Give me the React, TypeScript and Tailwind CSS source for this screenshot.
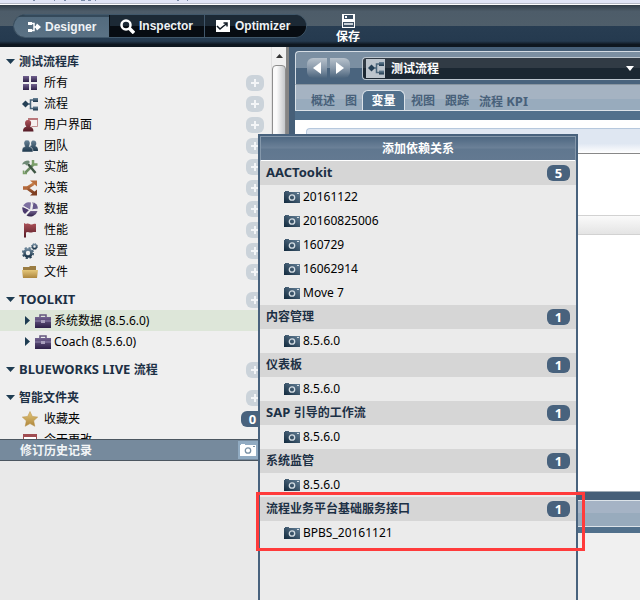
import React from "react";

type IconName =
  | "all" | "flow" | "ui" | "team" | "tools" | "decide" | "data" | "flag" | "gear" | "folder" | "star" | "calendar" | "case";

const iconArt: Record<IconName, React.ReactNode> = {
  all: (
    <g fill="url(#purple)">
      <rect x="1" y="1" width="6" height="6" /><rect x="9" y="1" width="6" height="6" />
      <rect x="1" y="9" width="6" height="6" /><rect x="9" y="9" width="6" height="6" />
    </g>
  ),
  flow: (
    <g>
      <path d="M0 8l3.500-3.500L7 8l-3.500 3.500z" fill="#243f55" />
      <path d="M6 8h3M12 4H8.500v8.500H12" fill="none" stroke="#4b667b" strokeWidth="1.500" />
      <rect x="11" y="2" width="5" height="4" fill="url(#slate)" /><rect x="11" y="10.500" width="5" height="4" fill="url(#slate)" />
    </g>
  ),
  ui: (
    <g>
      <path d="M6.500 1.500h9v8h-6" fill="#f6f0f0" stroke="#c49092" />
      <path d="M6 1h10v2H6z" fill="#b9777a" />
      <path d="M6 3c2.800 0 3.500 2 3 4.200-.2 1.300-.8 1.800-.8 2.600 2 .6 3.300 1.700 3.300 4.700H1c0-3 1-4.100 3.300-4.700 0-.8-1-1.300-1.200-2.600C2.800 5 3.500 3 6 3z" fill="url(#red)" />
    </g>
  ),
  team: (
    <g fill="url(#slate)">
      <path d="M11.500 2.500c2.300 0 3 1.700 2.800 3.500-.2 1.200-.8 1.700-.8 2.300 2 .5 2.500 1.800 2.500 4.700H9L8 8l1.500-.8C8.500 4.500 9.500 2.500 11.500 2.500z" />
      <path d="M5 2c2.500 0 3.200 1.900 3 3.900-.2 1.300-.8 1.900-.8 2.600 2.500.7 3.800 1.700 3.800 5.500H0c0-3.800.7-4.800 3-5.500 0-.7-.8-1.300-1-2.600C1.700 3.900 2.500 2 5 2z" stroke="#efefef" strokeWidth=".5" />
    </g>
  ),
  tools: (
    <g fill="none">
      <path d="M3 14l8.500-8.500" stroke="#6d8d63" strokeWidth="2.500" />
      <path d="M6 5l7.500 9" stroke="#3e5643" strokeWidth="2.500" />
      <path d="M0 5.500C1 3 3 1.500 6.500 1.500L8 3 4.500 6.500 3 5z" fill="#6f8a76" />
      <path d="M11 1v4.500h4.500" stroke="#7b9f69" strokeWidth="2.500" />
      <path d="M1.500 11.500v3H5" stroke="#7b9f69" strokeWidth="1.500" />
    </g>
  ),
  decide: (
    <g>
      <path d="M1 8h4l7-4.500M5 8l7 5" fill="none" stroke="url(#orange)" strokeWidth="2.800" />
      <path d="M8 .5h7v6z" fill="#b96f3d" /><path d="M15 9.500v6H8z" fill="#7e3e21" />
      <path d="M1 6.500h5v3H1z" fill="#b4683a" />
    </g>
  ),
  data: (
    <g>
      <path d="M10 1a7 7 0 0 1 6 7l-6 1z" fill="#66588a" />
      <path d="M9 1.500A7 7 0 0 0 1 5l7 4z" fill="#7d70a0" />
      <path d="M.5 6A7 7 0 0 0 3 13l4-4z" fill="#4b3a6e" />
      <path d="M4.500 14.500A7.500 7.500 0 0 0 15.500 10L8.500 10z" fill="url(#purple)" />
      <path d="M10 8l1-7M9 9l7-1M8 9L1 5M8 9l-4 5" stroke="#efefef" strokeWidth="1" />
    </g>
  ),
  flag: <path d="M2 1l2 1c3-1.500 4 1 6 .5 1.500-.3 2-1 4-.5v8c-3-.5-4 .9-6 .5-1.500-.5-2.500-1-4 0v5H2z" fill="url(#red)" />,
  gear: (
    <g fill="none" stroke="url(#slate)">
      <circle cx="6" cy="10" r="3.500" strokeWidth="2.600" />
      <circle cx="6" cy="10" r="5.200" strokeWidth="1.700" strokeDasharray="2.200 1.880" />
      <circle cx="12.500" cy="3.500" r="2" strokeWidth="1.500" />
      <circle cx="12.500" cy="3.500" r="3" strokeWidth="1" strokeDasharray="1.300 1.050" />
    </g>
  ),
  folder: (
    <g>
      <path d="M1 3h6l1-1h6v4H1z" fill="#9a7c42" />
      <path d="M0 6h16l-1 8H1z" fill="url(#gold)" />
    </g>
  ),
  star: <path d="M8 .5l2.300 4.900 5.400.7-4 3.700 1.100 5.500L8 12.600l-4.800 2.700 1.100-5.500-4-3.700 5.400-.7z" fill="url(#gold)" stroke="#b68f43" strokeWidth=".5" />,
  calendar: (
    <g>
      <rect x="1.500" y="2.500" width="13" height="13" fill="#fff" stroke="#9b4b50" />
      <path d="M1 2h14v3H1z" fill="#a14d52" /><path d="M4 7h8v1H4z" fill="#9b4b50" />
    </g>
  ),
  case: (
    <g>
      <path d="M5 4V2h6v2" fill="none" stroke="#65577f" strokeWidth="1.500" />
      <path d="M0 4h16v11H0z" fill="url(#purple)" />
      <path d="M0 8h16" stroke="#8e82aa" /><rect x="6" y="7" width="4" height="3" fill="#aaa0bd" />
    </g>
  ),
};

function Icon({ name }: { name: IconName }) {
  return <svg viewBox="0 0 16 16" className="size-4 shrink-0" aria-hidden="true">{iconArt[name]}</svg>;
}

function Gradients() {
  const stops: [string, string, string][] = [
    ["purple", "#72628f", "#2e2048"], ["slate", "#698397", "#1d374c"], ["red", "#ad5259", "#541a25"],
    ["orange", "#c9814b", "#7e3e21"], ["gold", "#e5c779", "#ad863d"],
  ];
  return (
    <svg className="absolute size-0" aria-hidden="true">
      <defs>
        {stops.map(([id, a, b]) => (
          <linearGradient key={id} id={id} x1="0" y1="0" x2="0" y2="1"><stop stopColor={a} /><stop offset="1" stopColor={b} /></linearGradient>
        ))}
        <linearGradient id="camera" x1="1" y1="0" x2="0" y2="1"><stop stopColor="#68839a" /><stop offset="1" stopColor="#10283c" /></linearGradient>
      </defs>
    </svg>
  );
}

function Camera({ white = false }: { white?: boolean }) {
  const detail = white ? "#7890a5" : "#d5dde3";
  return (
    <svg viewBox="0 0 16 12" className="h-3 w-4 shrink-0" aria-hidden="true">
      <path d="M0 1h1V0h4v1h11v11H0z" fill={white ? "#fff" : "url(#camera)"} />
      <circle cx="8" cy="6.500" r="2.700" fill="none" stroke={detail} strokeWidth="1.300" />
      <path d="M13 2.500h2" stroke={detail} />
    </svg>
  );
}

/* Latin words in bold headings are set one step larger than the Chinese text. */
function Heading({ text }: { text: string }) {
  return <>{text.split(/([A-Z][A-Za-z ]+)/).map((part, i) => (i % 2 ? <span key={i} className="text-[13px] whitespace-pre">{part}</span> : part))}</>;
}

function Count({ value }: { value: number }) {
  return <span className="ml-auto h-4 w-[23px] shrink-0 rounded-md bg-[#48627d] text-center text-[13px] font-bold leading-4 text-white">{value}</span>;
}

function AddButton({ label }: { label: string }) {
  return (
    <button aria-label={`新建 ${label}`} className="ml-auto flex h-4 w-[18px] shrink-0 items-center justify-center rounded-md bg-[#cbd3da]">
      <svg viewBox="0 0 8 8" className="size-2"><path d="M4 0v8M0 4h8" stroke="#f3f5f7" strokeWidth="2" /></svg>
    </button>
  );
}

function Section({ title, add = true, children }: { title: string; add?: boolean; children?: React.ReactNode }) {
  return (
    <section className="mb-[7px]">
      <div className="flex h-[21px] items-center pr-[7px] pl-[6px]">
        <svg viewBox="0 0 9 5" className="mr-1 h-[5px] w-[9px]" aria-hidden="true"><path d="M0 0h9L4.500 5z" fill="#1e3c52" /></svg>
        <h2 className="font-bold whitespace-nowrap text-[#1c3045]"><Heading text={title} /></h2>
        {add && <AddButton label={title} />}
      </div>
      <ul>{children}</ul>
    </section>
  );
}

function Item({ icon, label, children }: { icon: IconName; label: string; children?: React.ReactNode }) {
  return (
    <li className="flex h-[21px] items-center pr-[7px] pl-[22px] text-black">
      <Icon name={icon} /><span className="ml-[6px]">{label}</span>{children}
    </li>
  );
}

function ToolkitItem({ label, active = false }: { label: string; active?: boolean }) {
  return (
    <li className={`flex h-[21px] items-center pl-[25px] text-black ${active ? "bg-[#dde6d9]" : ""}`}>
      <svg viewBox="0 0 5 9" className="mr-[5px] h-[9px] w-[5px]" aria-hidden="true"><path d="M0 0v9l5-4.500z" fill="#1e3c52" /></svg>
      <Icon name="case" /><span className="ml-[3px]">{label}</span>
    </li>
  );
}

const library: [IconName, string][] = [
  ["all", "所有"], ["flow", "流程"], ["ui", "用户界面"], ["team", "团队"], ["tools", "实施"],
  ["decide", "决策"], ["data", "数据"], ["flag", "性能"], ["gear", "设置"], ["folder", "文件"],
];

const dependencies = [
  { name: "AACTookit", versions: ["20161122", "20160825006", "160729", "16062914", "Move 7"] },
  { name: "内容管理", versions: ["8.5.6.0"] },
  { name: "仪表板", versions: ["8.5.6.0"] },
  { name: "SAP 引导的工作流", versions: ["8.5.6.0"] },
  { name: "系统监管", versions: ["8.5.6.0"] },
  { name: "流程业务平台基础服务接口", versions: ["BPBS_20161121"] },
];

function Header() {
  const tab = "flex h-full items-center text-xs font-bold text-[#eef2f5] font-['Liberation_Sans',sans-serif]";
  const dark = "bg-[linear-gradient(#1c2935_50%,#070c12_50%)]";
  return (
    <header>
      <div className="h-[5px] border-b border-white bg-[#e0e4f6]">
        <div className="h-1 border-b border-[#b5b9c6]">
          <svg viewBox="0 0 200 1" className="h-px w-[200px]" aria-hidden="true">
            <path d="M33 .5h2M54 .5h1M64 .5h2M81 .5h4M88 .5h3M95 .5h1M177 .5h2M187 .5h1" stroke="#7a8ba8" />
          </svg>
        </div>
      </div>
      <div className="flex h-[42px] items-center bg-[linear-gradient(#313d48,#4d5c69_15%,#4f5e6a_50%,#283d52_50%,#253a4f_86%,#0e1720_94%)] pl-[13px]">
        <nav className="flex h-6 overflow-hidden rounded-full border border-[#41586b] bg-[#0f1922]">
          <button className={`${tab} w-[95px] gap-1 border-t-2 border-[#34495a] bg-[linear-gradient(#536b7e,#5b7285)] pl-[13px]`}>
            <svg viewBox="0 0 14 12" className="h-3 w-[14px]" aria-hidden="true">
              <path d="M1 1h4v3H1zM1 8h4v3H1zM10 2.500l4 3.500-4 3.500L8 6z" fill="#fff" />
              <path d="M4 2.500h3v7H4M7 6h3" fill="none" stroke="#fff" strokeWidth="1.500" />
            </svg>
            Designer
          </button>
          <button className={`${tab} ${dark} w-[95px] gap-1 border-l border-[#0b1219] pl-[10px]`}>
            <svg viewBox="0 0 15 15" className="size-[15px]" aria-hidden="true">
              <circle cx="6" cy="6" r="4.500" fill="none" stroke="#fff" strokeWidth="2.500" /><path d="M9 9l5 5" stroke="#fff" strokeWidth="3.500" />
            </svg>
            Inspector
          </button>
          <button className={`${tab} ${dark} w-[102px] gap-[5px] border-l border-[#40566a] pl-[11px]`}>
            <svg viewBox="0 0 14 12" className="h-3 w-[14px]" aria-hidden="true">
              <path d="M0 0h14v12H0z" fill="#fff" /><path d="M1 6l3 3 3-2.500 4-3M7.500 3H11v3.500" fill="none" stroke="#101a24" strokeWidth="1.500" />
            </svg>
            Optimizer
          </button>
        </nav>
        <button className="ml-[29px] flex flex-col items-center pt-[6px] font-bold text-white">
          <svg viewBox="0 0 13 14" className="h-[14px] w-[13px]" aria-hidden="true">
            <path d="M0 0h13v14H0z" fill="#fff" /><path d="M2 1h9v4H2zM1 8h11v5H1z" fill="#3d5063" />
            <path d="M3 2h2v2H3z" fill="#fff" /><path d="M2 9h9v2H2z" fill="#c9d0d7" />
          </svg>
          <span className="pt-px leading-4">保存</span>
        </button>
      </div>
    </header>
  );
}

function Sidebar() {
  return (
    <aside className="w-[289px] shrink-0">
      <div className="flex h-[392px]">
        <div className="w-[271px] overflow-hidden bg-[#efefef] pt-1">
          <Section title="测试流程库" add={false}>
            {library.map(([icon, label]) => <Item key={label} icon={icon} label={label}><AddButton label={label} /></Item>)}
          </Section>
          <Section title="TOOLKIT">
            <ToolkitItem label="系统数据 (8.5.6.0)" active />
            <ToolkitItem label="Coach (8.5.6.0)" />
          </Section>
          <Section title="BLUEWORKS LIVE 流程" />
          <Section title="智能文件夹">
            <Item icon="star" label="收藏夹"><Count value={0} /></Item>
            <Item icon="calendar" label="今天更改" />
          </Section>
        </div>
        <div className="w-[15px] border-l border-[#e0e0e0] bg-[#f0f0f0]">
          <div className="flex h-[18px] items-center justify-center">
            <svg viewBox="0 0 7 4" className="h-1 w-[7px]" aria-hidden="true"><path d="M0 4L3.500 0 7 4z" fill="#333" /></svg>
          </div>
          <div className="h-[374px] rounded-sm border border-[#8e8e8e] bg-[linear-gradient(90deg,#fafafa_30%,#c4c7ca)]" />
        </div>
        <div className="w-[3px] bg-[#858585]" />
      </div>
      <div className="flex h-[22px] items-center border-y border-[#4b5660] bg-[#768a9d] pl-5 font-bold text-[#f2f5f7]">
        <h2 className="pt-px">修订历史记录</h2>
        <button aria-label="快照" className="ml-auto mr-[31px] flex h-[18px] w-5 items-center justify-center bg-[#91abc2]"><Camera white /></button>
      </div>
    </aside>
  );
}

function Editor() {
  const tab = "h-[18px] leading-[18px]";
  const nav = "flex size-5 items-center justify-center bg-[linear-gradient(#b7c1cb,#8a9aab_50%,#4c657d)]";
  return (
    <main className="flex min-w-0 flex-1 flex-col bg-[#f0f0f0]">
      <div className="bg-[#465f78] pt-1 pl-[6px]">
        <div className="flex h-[33px] items-center rounded-tl border-t border-l border-[#d4dce4] bg-[linear-gradient(#7b8fa2_50%,#4a647e_50%)] pl-[11px]">
          <button aria-label="后退" className={`${nav} rounded-l-md`}>
            <svg viewBox="0 0 8 12" className="h-3 w-2"><path d="M8 0v12L0 6z" fill="#fff" /></svg>
          </button>
          <button aria-label="前进" className={`${nav} ml-[3px] rounded-r-md`}>
            <svg viewBox="0 0 8 12" className="h-3 w-2"><path d="M0 0v12l8-6z" fill="#fff" /></svg>
          </button>
          <div className="ml-3 flex h-[23px] flex-1 items-center rounded-l border border-r-0 border-[#bcc6cf] bg-[linear-gradient(#313b45_50%,#1b2732_50%)] pl-[3px]">
            <span className="flex size-[19px] items-center justify-center bg-[#bcc4cc]"><Icon name="flow" /></span>
            <select aria-label="当前流程" className="ml-[6px] min-w-0 flex-1 appearance-none pt-[2px] font-bold text-white"><option>测试流程</option></select>
            <svg viewBox="0 0 8 5" className="mr-[6px] h-[5px] w-2" aria-hidden="true"><path d="M0 0h8L4 5z" fill="#fff" /></svg>
          </div>
        </div>
      </div>
      <div className="bg-[#465f78] pl-[6px]">
        <div className="flex h-[27px] items-end border-t border-b border-l border-[#dce3e9] border-t-[#8996a2] bg-[linear-gradient(#a5b3c2_55%,#98abbd_55%)] pl-[15px] font-bold text-[#48617a]">
          <button className={tab}>概述</button>
          <button className={`${tab} ml-[10px]`}>图</button>
          <button className="ml-[5px] flex h-5 w-[43px] items-center justify-center rounded-t-md border border-b-0 border-[#dce3e9] bg-[#51708c] pt-px text-white">变量</button>
          <button className={`${tab} ml-[6px]`}>视图</button>
          <button className={`${tab} ml-[10px]`}>跟踪</button>
          <button className={`${tab} ml-[10px]`}>流程 <span className="text-[13px]">KPI</span></button>
        </div>
        <div className="h-[9px] bg-[#51708c]" />
        <div className="h-[371px] bg-white pt-2">
          <div className="ml-[11px] h-[26px] rounded-tl border-t border-b border-l border-[#b6c8dd] border-b-[#888] bg-[linear-gradient(#dfe7f2_60%,#fff)]" />
          <div className="mt-[61px] h-5 border-y border-[#d2d2d2] bg-[linear-gradient(#fafafa,#e4e4e4)]" />
        </div>
      </div>
      <div className="h-[42px] border-t border-[#9fabb5] bg-[#465f78] pt-2">
        <div className="h-[27px] border-y border-[#dce3e9] bg-[linear-gradient(#a5b3c5_50%,#98abbd_50%)]" />
        <div className="h-[6px] bg-[#51708c]" />
      </div>
    </main>
  );
}

function DependencyDialog() {
  return (
    <div role="dialog" aria-label="添加依赖关系" className="absolute top-[134px] bottom-0 left-[258px] w-80 border-2 border-b-0 border-[#48627d] bg-[#ebebeb]">
      <h2 className="flex h-[25px] items-center justify-center border border-[#8598ab] border-b-white bg-[linear-gradient(#4e6882,#6c8198_48%,#60778f_52%,#637991)] font-bold text-white">添加依赖关系</h2>
      {dependencies.map((dep) => (
        <section key={dep.name}>
          <div className="flex h-6 items-center bg-[#d6d6d6] pr-[6px] pl-[6px]">
            <h3 className="font-bold text-[#1c3045]"><Heading text={dep.name} /></h3>
            <Count value={dep.versions.length} />
          </div>
          <ul>
            {dep.versions.map((v) => (
              <li key={v}>
                <button className="flex h-6 w-full items-center gap-[3px] pl-6 text-black"><Camera />{v}</button>
              </li>
            ))}
          </ul>
        </section>
      ))}
      <div className="pointer-events-none absolute top-[356px] -right-[9px] -left-[4px] h-[59px] border-3 border-[#ff3b3b]" />
    </div>
  );
}

export default function App() {
  return (
    <div className="relative flex min-h-screen flex-col overflow-hidden bg-[#e9e9e9] font-['Noto_Sans','Noto_Sans_CJK_SC',sans-serif] text-xs">
      <Gradients />
      <Header />
      <div className="flex flex-1"><Sidebar /><Editor /></div>
      <DependencyDialog />
    </div>
  );
}
